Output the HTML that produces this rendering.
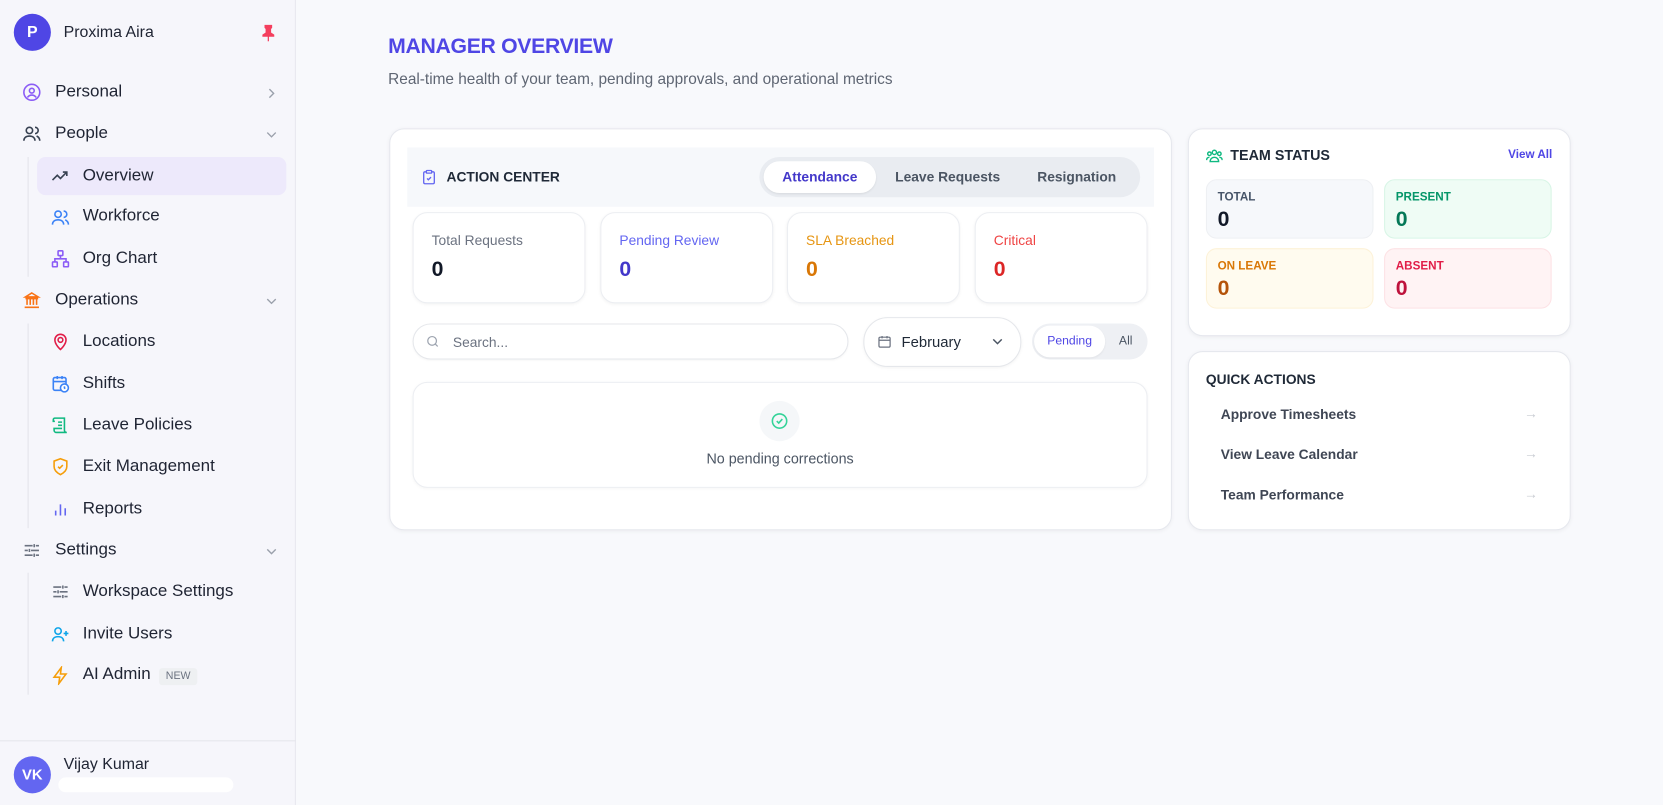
<!DOCTYPE html>
<html><head><meta charset="utf-8"><style>
*{box-sizing:border-box;margin:0;padding:0}
html,body{width:1663px;height:805px;overflow:hidden;background:#f8f9fc;font-family:"Liberation Sans",sans-serif}
#w{width:1568px;height:759px;position:relative;transform:scale(1.0606);transform-origin:0 0}
.a{position:absolute}
.sb{left:0;top:0;width:279px;height:759px;background:#f6f6fb;border-right:1px solid #e8e8ef}
.nav{position:absolute;font-size:16px;color:#1f2433;white-space:nowrap}
.ic{position:absolute;width:18px;height:18px}
.chev{position:absolute;left:250px;width:12px;height:12px}
.card{position:absolute;background:#fff;border:1px solid #e6e8ee;border-radius:14px;box-shadow:0 1px 4px rgba(0,0,0,.05)}
.sc{position:absolute;top:200px;width:163px;height:86px;background:#fff;border:1px solid #eceef2;border-radius:14px;box-shadow:0 1px 3px rgba(0,0,0,.05)}
.sc .l{position:absolute;left:17px;top:18px;font-size:13px}
.sc .v{position:absolute;left:17px;top:42px;font-size:20px;font-weight:bold}
.ts{position:absolute;width:158px;border-radius:10px}
.ts .l{position:absolute;left:10px;top:10px;font-size:11px;font-weight:bold}
.ts .v{position:absolute;left:10px;top:26px;font-size:20px;font-weight:bold}
.qa{position:absolute;left:1151px;font-size:13px;font-weight:bold;color:#3f4654}
.ar{position:absolute;left:1437px;font-size:13px;color:#c9ccd3}
</style></head><body><div id="w">
<div class="a sb"></div>
<div class="a" style="left:13px;top:13px;width:35px;height:35px;border-radius:50%;background:#4f46e5;color:#fff;font-weight:bold;font-size:15px;text-align:center;line-height:35px">P</div>
<div class="nav" style="left:60px;top:22px;font-size:15px;font-weight:500">Proxima Aira</div>
<svg class="a" style="left:246px;top:23px" width="14" height="16" viewBox="0 0 14 16"><path d="M4 1h6v2l-1 1v4l3 2v1H2v-1l3-2V4L4 3z M7 11v5" fill="#f43f5e" stroke="#f43f5e" stroke-width="1.2"/></svg>

<svg class="ic" style="left:21px;top:78px" viewBox="0 0 24 24" fill="none" stroke="#8b5cf6" stroke-width="2"><circle cx="12" cy="12" r="10"/><circle cx="12" cy="10" r="3"/><path d="M6.5 18.5c1.5-2 3.3-3 5.5-3s4 1 5.5 3"/></svg>
<div class="nav" style="left:52px;top:78px">Personal</div>
<svg class="chev" style="top:82px" viewBox="0 0 12 12" fill="none" stroke="#9aa0ab" stroke-width="1.3"><path d="M4 2l4 4-4 4"/></svg>

<svg class="ic" style="left:21px;top:117px" viewBox="0 0 24 24" fill="none" stroke="#374151" stroke-width="2"><circle cx="9" cy="8" r="4"/><path d="M2 21c0-4 3-6 7-6s7 2 7 6M16 4a4 4 0 010 8M22 21c0-3-2-5-4-6"/></svg>
<div class="nav" style="left:52px;top:117px;font-weight:500">People</div>
<svg class="chev" style="top:121px" viewBox="0 0 12 12" fill="none" stroke="#9aa0ab" stroke-width="1.3"><path d="M2 4l4 4 4-4"/></svg>
<div class="a" style="left:26px;top:148px;width:1px;height:113px;background:#e3e4ea"></div>
<div class="a" style="left:35px;top:148px;width:235px;height:36px;border-radius:8px;background:#ede9fb"></div>
<svg class="ic" style="left:48px;top:157px" viewBox="0 0 24 24" fill="none" stroke="#374151" stroke-width="2"><path d="M2 17l6-6 4 4 8-8M15 7h5v5"/></svg>
<div class="nav" style="left:78px;top:157px;font-weight:500">Overview</div>
<svg class="ic" style="left:48px;top:196px" viewBox="0 0 24 24" fill="none" stroke="#3b82f6" stroke-width="2"><circle cx="9" cy="8" r="4"/><path d="M2 21c0-4 3-6 7-6s7 2 7 6M16 4a4 4 0 010 8M22 21c0-3-2-5-4-6"/></svg>
<div class="nav" style="left:78px;top:195px">Workforce</div>
<svg class="ic" style="left:48px;top:235px" viewBox="0 0 24 24" fill="none" stroke="#8b5cf6" stroke-width="2"><rect x="9" y="2" width="6" height="6" rx="1"/><rect x="2" y="16" width="6" height="6" rx="1"/><rect x="16" y="16" width="6" height="6" rx="1"/><path d="M12 8v4M5 16v-4h14v4"/></svg>
<div class="nav" style="left:78px;top:235px">Org Chart</div>

<svg class="ic" style="left:21px;top:274px" viewBox="0 0 24 24" fill="none" stroke="#f97316" stroke-width="2"><path d="M3 21h18M4 10h16M12 3l8 5H4zM6 10v8M10 10v8M14 10v8M18 10v8"/></svg>
<div class="nav" style="left:52px;top:274px">Operations</div>
<svg class="chev" style="top:278px" viewBox="0 0 12 12" fill="none" stroke="#9aa0ab" stroke-width="1.3"><path d="M2 4l4 4 4-4"/></svg>
<div class="a" style="left:26px;top:305px;width:1px;height:193px;background:#e3e4ea"></div>
<svg class="ic" style="left:48px;top:313px" viewBox="0 0 24 24" fill="none" stroke="#e11d48" stroke-width="2"><path d="M12 22s7-6 7-12a7 7 0 00-14 0c0 6 7 12 7 12z"/><circle cx="12" cy="10" r="3"/></svg>
<div class="nav" style="left:78px;top:313px">Locations</div>
<svg class="ic" style="left:48px;top:353px" viewBox="0 0 24 24" fill="none" stroke="#3b82f6" stroke-width="2"><rect x="3" y="4" width="16" height="16" rx="2"/><path d="M8 2v4M14 2v4M3 9h16"/><circle cx="17" cy="17" r="5" fill="#fff"/><path d="M17 15v2l1 1"/></svg>
<div class="nav" style="left:78px;top:353px">Shifts</div>
<svg class="ic" style="left:48px;top:392px" viewBox="0 0 24 24" fill="none" stroke="#10b981" stroke-width="2"><path d="M5 3h12v15a3 3 0 003 3H7a3 3 0 01-3-3v-2h10M5 3a2 2 0 00-2 2v2h2M9 8h5M9 12h5"/></svg>
<div class="nav" style="left:78px;top:392px">Leave Policies</div>
<svg class="ic" style="left:48px;top:431px" viewBox="0 0 24 24" fill="none" stroke="#f59e0b" stroke-width="2"><path d="M12 2l8 3v7c0 5-4 8-8 10-4-2-8-5-8-10V5z"/><path d="M9 12l2 2 4-4"/></svg>
<div class="nav" style="left:78px;top:431px">Exit Management</div>
<svg class="ic" style="left:48px;top:471px" viewBox="0 0 24 24" fill="none" stroke="#6366f1" stroke-width="2"><path d="M6 20v-6M12 20V6M18 20v-9"/></svg>
<div class="nav" style="left:78px;top:471px">Reports</div>

<svg class="ic" style="left:21px;top:510px" viewBox="0 0 24 24" fill="none" stroke="#6b7280" stroke-width="2"><path d="M3 6h10M17 6h4M15 4v4M3 12h4M11 12h10M9 10v4M3 18h10M17 18h4M15 16v4"/></svg>
<div class="nav" style="left:52px;top:510px">Settings</div>
<svg class="chev" style="top:514px" viewBox="0 0 12 12" fill="none" stroke="#9aa0ab" stroke-width="1.3"><path d="M2 4l4 4 4-4"/></svg>
<div class="a" style="left:26px;top:540px;width:1px;height:115px;background:#e3e4ea"></div>
<svg class="ic" style="left:48px;top:549px" viewBox="0 0 24 24" fill="none" stroke="#6b7280" stroke-width="2"><path d="M3 6h10M17 6h4M15 4v4M3 12h4M11 12h10M9 10v4M3 18h10M17 18h4M15 16v4"/></svg>
<div class="nav" style="left:78px;top:549px">Workspace Settings</div>
<svg class="ic" style="left:48px;top:589px" viewBox="0 0 24 24" fill="none" stroke="#0ea5e9" stroke-width="2"><circle cx="9" cy="8" r="4"/><path d="M2 21c0-4 3-6 7-6s7 2 7 6M19 8v6M16 11h6"/></svg>
<div class="nav" style="left:78px;top:589px">Invite Users</div>
<svg class="ic" style="left:48px;top:628px" viewBox="0 0 24 24" fill="none" stroke="#f59e0b" stroke-width="2"><path d="M13 2L4 14h7l-1 8 9-12h-7z"/></svg>
<div class="nav" style="left:78px;top:627px">AI Admin</div>
<div class="a" style="left:150px;top:630px;width:36px;height:16px;background:#eef0f2;border-radius:3px;font-size:10px;color:#6b7280;text-align:center;line-height:16px">NEW</div>

<div class="a" style="left:0;top:698px;width:279px;height:1px;background:#e5e6ec"></div>
<div class="a" style="left:13px;top:713px;width:35px;height:35px;border-radius:50%;background:#6366f1;color:#fff;font-weight:bold;font-size:14px;text-align:center;line-height:35px">VK</div>
<div class="nav" style="left:60px;top:712px;font-size:15px">Vijay Kumar</div>
<div class="a" style="left:55px;top:733px;width:165px;height:14px;background:#fff;border-radius:7px"></div>

<div class="a" style="left:366px;top:33px;font-size:20px;font-weight:bold;color:#4f46e5;letter-spacing:-.3px">MANAGER OVERVIEW</div>
<div class="a" style="left:366px;top:67px;font-size:14.5px;color:#5f6673">Real-time health of your team, pending approvals, and operational metrics</div>

<div class="card" style="left:367px;top:121px;width:738px;height:379px"></div>
<div class="a" style="left:384px;top:139px;width:704px;height:56px;background:#f6f8fb"></div>
<svg class="a" style="left:397px;top:159px" width="15" height="16" viewBox="0 0 24 24" fill="none" stroke="#6366f1" stroke-width="2"><rect x="8" y="2" width="8" height="4" rx="1"/><path d="M16 4h2a2 2 0 012 2v14a2 2 0 01-2 2H6a2 2 0 01-2-2V6a2 2 0 012-2h2M9 14l2 2 4-4"/></svg>
<div class="a" style="left:421px;top:159px;font-size:13px;font-weight:bold;color:#1f2937">ACTION CENTER</div>
<div class="a" style="left:716px;top:148px;width:359px;height:38px;background:#e9ecf1;border-radius:19px"></div>
<div class="a" style="left:720px;top:152px;width:106px;height:30px;background:#fff;border-radius:15px;box-shadow:0 1px 2px rgba(0,0,0,.08)"></div>
<div class="a" style="left:720px;top:159px;width:106px;text-align:center;font-size:13px;font-weight:bold;color:#4338ca">Attendance</div>
<div class="a" style="left:844px;top:159px;font-size:13px;font-weight:bold;color:#4b5563">Leave Requests</div>
<div class="a" style="left:978px;top:159px;font-size:13px;font-weight:bold;color:#4b5563">Resignation</div>

<div class="sc" style="left:389px"><div class="l" style="color:#6b7280">Total Requests</div><div class="v" style="color:#111827">0</div></div>
<div class="sc" style="left:566px"><div class="l" style="color:#6366f1">Pending Review</div><div class="v" style="color:#4338ca">0</div></div>
<div class="sc" style="left:742px"><div class="l" style="color:#e69512">SLA Breached</div><div class="v" style="color:#d97706">0</div></div>
<div class="sc" style="left:919px"><div class="l" style="color:#ef4444">Critical</div><div class="v" style="color:#dc2626">0</div></div>

<div class="a" style="left:389px;top:305px;width:411px;height:34px;border:1px solid #e5e7eb;border-radius:17px;background:#fff;box-shadow:0 1px 2px rgba(0,0,0,.04)"></div>
<svg class="a" style="left:401px;top:315px" width="14" height="14" viewBox="0 0 24 24" fill="none" stroke="#9ca3af" stroke-width="2"><circle cx="11" cy="11" r="7"/><path d="M20 20l-4-4"/></svg>
<div class="a" style="left:427px;top:315px;font-size:13px;color:#6b7280">Search...</div>
<div class="a" style="left:814px;top:299px;width:149px;height:47px;border:1px solid #e5e7eb;border-radius:23px;background:#fff;box-shadow:0 1px 3px rgba(0,0,0,.05)"></div>
<svg class="a" style="left:827px;top:315px" width="14" height="14" viewBox="0 0 24 24" fill="none" stroke="#6b7280" stroke-width="2"><rect x="3" y="5" width="18" height="16" rx="2"/><path d="M8 3v4M16 3v4M3 10h18"/></svg>
<div class="a" style="left:850px;top:314px;font-size:14px;color:#1f2937">February</div>
<svg class="a" style="left:934px;top:317px" width="13" height="10" viewBox="0 0 12 10" fill="none" stroke="#4b5563" stroke-width="1.4"><path d="M2 3l4 4 4-4"/></svg>
<div class="a" style="left:973px;top:305px;width:109px;height:34px;background:#eef0f4;border-radius:17px"></div>
<div class="a" style="left:975px;top:307px;width:67px;height:30px;background:#fff;border-radius:15px;box-shadow:0 1px 2px rgba(0,0,0,.06)"></div>
<div class="a" style="left:975px;top:307px;width:67px;height:30px;line-height:30px;text-align:center;font-size:11.5px;color:#4f46e5">Pending</div>
<div class="a" style="left:1055px;top:307px;height:30px;line-height:30px;font-size:11.5px;color:#4b5563">All</div>

<div class="a" style="left:389px;top:360px;width:693px;height:100px;border:1px solid #eceef2;border-radius:14px;background:#fff;box-shadow:0 1px 3px rgba(0,0,0,.04)"></div>
<div class="a" style="left:716px;top:378px;width:38px;height:38px;border-radius:50%;background:#f5f7f9"></div>
<svg class="a" style="left:726px;top:388px" width="18" height="18" viewBox="0 0 24 24" fill="none" stroke="#34d399" stroke-width="2"><circle cx="12" cy="12" r="9"/><path d="M8.5 12l2.5 2.5 4.5-5"/></svg>
<div class="a" style="left:389px;top:425px;width:693px;text-align:center;font-size:13.5px;color:#4b5563">No pending corrections</div>

<div class="card" style="left:1120px;top:121px;width:361px;height:196px"></div>
<svg class="a" style="left:1137px;top:139px" width="16" height="16" viewBox="0 0 24 24" fill="none" stroke="#10b981" stroke-width="2"><circle cx="12" cy="7" r="3"/><circle cx="5" cy="9" r="2.5"/><circle cx="19" cy="9" r="2.5"/><path d="M6 20c0-4 3-6 6-6s6 2 6 6zM1 18c0-3 2-4 4-4M23 18c0-3-2-4-4-4"/></svg>
<div class="a" style="left:1160px;top:139px;font-size:13.5px;font-weight:bold;color:#1f2937">TEAM STATUS</div>
<div class="a" style="left:1422px;top:140px;font-size:11px;font-weight:bold;color:#4f46e5">View All</div>
<div class="ts" style="left:1137px;top:169px;height:56px;background:#f6f8fb;border:1px solid #eef0f3"><div class="l" style="color:#475569">TOTAL</div><div class="v" style="color:#111827">0</div></div>
<div class="ts" style="left:1305px;top:169px;height:56px;background:#effcf5;border:1px solid #d8f5e6"><div class="l" style="color:#059669">PRESENT</div><div class="v" style="color:#047857">0</div></div>
<div class="ts" style="left:1137px;top:234px;height:57px;background:#fffbef;border:1px solid #fdf2d8"><div class="l" style="color:#d97706">ON LEAVE</div><div class="v" style="color:#b45309">0</div></div>
<div class="ts" style="left:1305px;top:234px;height:57px;background:#fff3f4;border:1px solid #fde2e5"><div class="l" style="color:#e11d48">ABSENT</div><div class="v" style="color:#be123c">0</div></div>

<div class="card" style="left:1120px;top:331px;width:361px;height:169px"></div>
<div class="a" style="left:1137px;top:350px;font-size:13px;font-weight:bold;color:#1f2937">QUICK ACTIONS</div>
<div class="qa" style="top:383px">Approve Timesheets</div><div class="ar" style="top:382px">→</div>
<div class="qa" style="top:421px">View Leave Calendar</div><div class="ar" style="top:420px">→</div>
<div class="qa" style="top:459px">Team Performance</div><div class="ar" style="top:458px">→</div>
</div></body></html>
